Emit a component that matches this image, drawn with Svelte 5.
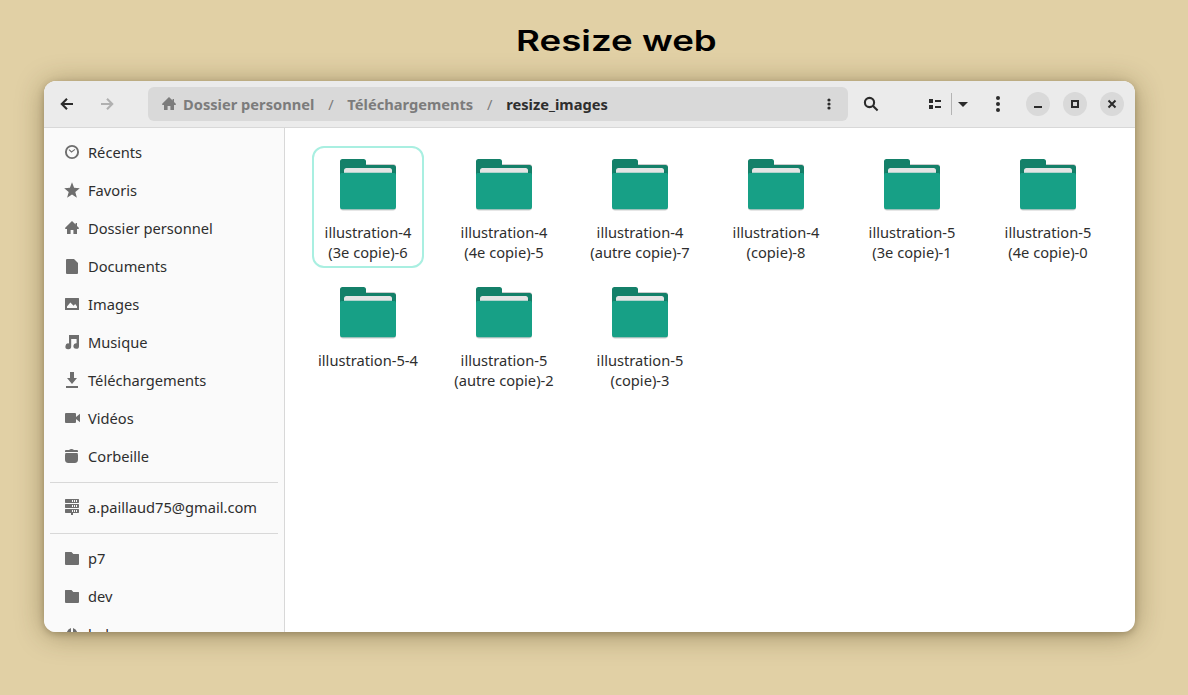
<script>
  const places = [
    { icon: 'clock', label: 'Récents' },
    { icon: 'star', label: 'Favoris' },
    { icon: 'home', label: 'Dossier personnel' },
    { icon: 'doc', label: 'Documents' },
    { icon: 'image', label: 'Images' },
    { icon: 'music', label: 'Musique' },
    { icon: 'download', label: 'Téléchargements' },
    { icon: 'video', label: 'Vidéos' },
    { icon: 'trash', label: 'Corbeille' }
  ];
  const accounts = [{ icon: 'server', label: 'a.paillaud75@gmail.com' }];
  const bookmarks = [
    { icon: 'folder', label: 'p7' },
    { icon: 'folder', label: 'dev' },
    { icon: 'dots', label: 'bak' }
  ];
  const groups = [places, accounts, bookmarks];
  const folders = [
    ['illustration-4', '(3e copie)-6'],
    ['illustration-4', '(4e copie)-5'],
    ['illustration-4', '(autre copie)-7'],
    ['illustration-4', '(copie)-8'],
    ['illustration-5', '(3e copie)-1'],
    ['illustration-5', '(4e copie)-0'],
    ['illustration-5-4'],
    ['illustration-5', '(autre copie)-2'],
    ['illustration-5', '(copie)-3']
  ];
  let selected = $state(0);
</script>

{#snippet glyph(name)}
  <svg class="glyph" width="16" height="16" viewBox="0 0 16 16" fill="currentColor">
    {#if name === 'clock'}
      <circle cx="8" cy="8" r="6.1" fill="none" stroke="currentColor" stroke-width="1.9" />
      <path d="M5 5.600 7.500 8 11 5.400" fill="none" stroke="currentColor" stroke-width="1.100" />
    {:else if name === 'star'}
      <path d="M8 .3 10.100 5.700 15.800 6.200 11.300 9.900 12.900 15.700 8 12.500 3.100 15.700 4.700 9.900 .2 6.200 5.900 5.700Z" />
    {:else if name === 'home'}
      <path d="M8 1 1.200 7.700V9H3v5h3.600V10h2.800v4H13V9h1.800V7.700L13 6V3h-1.400v1.500Z" />
    {:else if name === 'doc'}
      <path d="M3 1H10L14 5V15a1 1 0 0 1-1 1H3a1 1 0 0 1-1-1V2a1 1 0 0 1 1-1Z" />
    {:else if name === 'image'}
      <path fill-rule="evenodd" d="M1.500 2h13a.5.5 0 0 1 .5.5v11a.5.5 0 0 1-.5.5h-13A.5.5 0 0 1 1 13.500V2.500a.5.5 0 0 1 .5-.5ZM3 12h10V10.500L11.200 8 9.600 9.800 6.400 6.400 3 10.500Z" />
    {:else if name === 'music'}
      <path d="M5 1H15V11.900A2.800 2.800 0 1 1 12.600 9.300V5H7.200V12.200A2.900 2.900 0 1 1 5 9.500Z" />
    {:else if name === 'download'}
      <path d="M6 0h4v6h3L8 12 3 6h3ZM2 14h12v2H2Z" />
    {:else if name === 'video'}
      <path d="M2 3h9a1 1 0 0 1 1 1v3l4-3.300v8.600L12 9V12a1 1 0 0 1-1 1H2a1 1 0 0 1-1-1V4a1 1 0 0 1 1-1Z" />
    {:else if name === 'trash'}
      <path d="M5 2Q7.500 0 10 2h3a1 1 0 0 1 1 1v1H1V3a1 1 0 0 1 1-1ZM1.500 5h12l.5 2v4.500a3.500 3.500 0 0 1-3.300 3.500H4.300A3.500 3.500 0 0 1 1 11.500V7Z" />
    {:else if name === 'server'}
      <path fill-rule="evenodd" d="M1.500 0H14.500l.5.500V3.500l-.5.500H1.500L1 3.500V.5ZM8 1V3H9V1ZM10 1V3H11V1ZM12 1V3H13V1ZM1.500 5H14.500l.5.500V8.500l-.5.500H1.500L1 8.500V5.500ZM8 6V8H9V6ZM10 6V8H11V6ZM12 6V8H13V6ZM1.500 10H14.500l.5.500V13.500l-.5.500H1.500L1 13.500V10.500ZM8 11V13H9V11ZM10 11V13H11V11ZM12 11V13H13V11Z" />
      <path d="M7 14h2v2H7Z" />
    {:else if name === 'folder'}
      <path d="M1.500 2H7.500L9.300 4H14.500a.5.5 0 0 1 .5.5V14a1 1 0 0 1-1 1H2a1 1 0 0 1-1-1V2.500A.5.5 0 0 1 1.500 2Z" />
    {:else if name === 'dots'}
      <path d="M7 2V7.500H2.500A7 7 0 0 1 7 2ZM9 2A7 7 0 0 1 13.500 7.500H9Z" />
    {/if}
  </svg>
{/snippet}

<main>
  <h1><span>Resize web</span></h1>

  <section class="window">
    <header>
      <nav class="history">
        <svg width="16" height="16" viewBox="0 0 16 16"><path d="M14 8H3M8 2.800 2.800 8 8 13.200" /></svg>
        <svg class="off" width="16" height="16" viewBox="0 0 16 16"><path d="M2 8H13M8 2.800 13.200 8 8 13.200" /></svg>
      </nav>
      <div class="path">
        {@render glyph('home')}
        <span class="crumb first">Dossier personnel</span>
        <i>/</i>
        <span class="crumb">Téléchargements</span>
        <i>/</i>
        <span class="crumb current">resize_images</span>
        <svg class="more" width="4" height="12" viewBox="0 0 4 12"><circle cx="2" cy="2" r="1.600" /><circle cx="2" cy="6" r="1.600" /><circle cx="2" cy="10" r="1.600" /></svg>
      </div>
      <svg class="search" width="16" height="16" viewBox="0 0 16 16"><circle cx="6.500" cy="6.500" r="4.600" /><path d="M9.800 9.800 14.600 14.500" /></svg>
      <div class="view">
        <svg width="12" height="10" viewBox="0 0 12 10"><path d="M0 0h4v4H0ZM0 6h4v4H0ZM6 1h6v2H6ZM6 7h6v2H6Z" /></svg>
        <span class="rule"></span>
        <svg width="10" height="5" viewBox="0 0 10 5"><path d="M0 0H10L5 5Z" /></svg>
      </div>
      <svg class="menu" width="4" height="16" viewBox="0 0 4 16"><circle cx="2" cy="2" r="2" /><circle cx="2" cy="8" r="2" /><circle cx="2" cy="14" r="2" /></svg>
      <div class="controls">
        <button aria-label="Réduire"><svg width="16" height="16" viewBox="0 0 16 16"><path d="M4 11h8" /></svg></button>
        <button aria-label="Agrandir"><svg width="16" height="16" viewBox="0 0 16 16"><path d="M5 5h6v6H5Z" /></svg></button>
        <button aria-label="Fermer"><svg width="16" height="16" viewBox="0 0 16 16"><path d="M4.500 4.500 11.500 11.500M11.500 4.500 4.500 11.500" /></svg></button>
      </div>
    </header>

    <div class="body">
      <aside>
        {#each groups as group}
          <ul>
            {#each group as item}
              <li>{@render glyph(item.icon)}<span>{item.label}</span></li>
            {/each}
          </ul>
        {/each}
      </aside>
      <div class="files">
        {#each folders as lines, n}
          <button class="tile" class:selected={n === selected} onclick={() => (selected = n)}>
            <svg class="folder" width="64" height="56" viewBox="0 0 64 56">
              <rect class="shade" x="4" y="8" width="56" height="46.500" rx="3" />
              <path fill="#148069" d="M6.500 3H27.500a2.500 2.500 0 0 1 2.500 2.500V9H57.500a2.500 2.500 0 0 1 2.500 2.500V30H4V5.500A2.500 2.500 0 0 1 6.500 3Z" />
              <path fill="#106653" d="M4 18 8 15.500V18H56V15.500L60 18V22H4Z" />
              <path fill="#e4e4e4" d="M10.500 12H53.500a2.500 2.500 0 0 1 2.500 2.500V22H8V14.500A2.500 2.500 0 0 1 10.500 12Z" />
              <path fill="#17a086" d="M6 16.800H58a2 2 0 0 1 2 2V50.700a2.500 2.500 0 0 1-2.500 2.500H6.500A2.500 2.500 0 0 1 4 50.700V18.800a2 2 0 0 1 2-2Z" />
            </svg>
            <span class="name">{#each lines as line}<span>{line}</span>{/each}</span>
          </button>
        {/each}
      </div>
    </div>
  </section>
</main>

<style>
  :global(body) { background: #e1d0a5; }
  main {
    box-sizing: border-box;
    height: 695px;
    padding: 0 53px 0 44px;
    overflow: hidden;
    font: 14.667px "Noto Sans", sans-serif;
    color: #2e2e2e;
  }
  h1 {
    height: 81px;
    margin: 0;
    padding-left: 471.500px;
    box-sizing: border-box;
    font: 600 28px/83px Inter, sans-serif;
    color: #000;
    white-space: nowrap;
  }
  h1 span { display: inline-block; transform: scaleX(1.31); transform-origin: left; }
  .window {
    height: 551px;
    display: flex;
    flex-direction: column;
    overflow: hidden;
    border-radius: 12px;
    background: #fff;
    box-shadow: 0 2px 6px rgba(60, 45, 10, .25), 0 3px 28px rgba(60, 45, 10, .4);
  }
  header {
    flex: none;
    box-sizing: border-box;
    height: 47px;
    display: flex;
    align-items: center;
    padding: 0 11px 0 15px;
    border-bottom: 1px solid #d8d8d8;
    background: #ebebeb;
  }
  header svg { flex: none; fill: #2b2b2b; }
  .history { display: flex; gap: 24px; width: 89px; }
  .history svg { fill: none; stroke: #2b2b2b; stroke-width: 2.1; }
  .history .off { stroke: #b0b0b0; }
  .path {
    box-sizing: border-box;
    width: 700px;
    height: 34px;
    display: flex;
    align-items: center;
    padding: 0 17px 0 13px;
    border-radius: 6px;
    background: #d9d9d9;
    font-weight: 700;
    color: #7c7c7c;
  }
  .path .glyph { fill: #7c7c7c; }
  .crumb.first { margin-left: 6px; }
  .crumb.current { color: #2e2e2e; }
  .path i { width: 33px; text-align: center; font-style: normal; font-weight: 400; }
  .more { margin-left: auto; }
  .search { margin-left: 15px; }
  header .search { fill: none; stroke: #2b2b2b; stroke-width: 2.1; }
  .view { display: flex; align-items: center; margin-left: 50px; }
  .rule { width: 1px; height: 22px; margin: 0 6px 0 10px; background: #b4b4b4; }
  .menu { margin-left: 28px; }
  .controls { display: flex; gap: 13px; margin-left: auto; }
  .controls button {
    width: 24px;
    height: 24px;
    padding: 4px;
    border: 0;
    border-radius: 50%;
    background: #d9d9d9;
  }
  .controls svg { display: block; fill: none; stroke: #2b2b2b; stroke-width: 2; }
  .body { flex: 1; min-height: 0; display: flex; }
  aside {
    flex: none;
    box-sizing: border-box;
    width: 241px;
    overflow: hidden;
    padding: 0 6px;
    border-right: 1px solid #d8d8d8;
    background: #fafafa;
  }
  ul { margin: 0; padding: 5px 0 7px; list-style: none; }
  ul + ul { border-top: 1px solid #d8d8d8; }
  li { height: 38px; display: flex; align-items: center; gap: 8px; padding-left: 14px; }
  li .glyph { color: #6e6e6e; }
  .files {
    display: grid;
    grid-template-columns: repeat(6, 112px);
    grid-auto-rows: 122px;
    gap: 6px 24px;
    align-content: start;
    padding: 18px 0 0 27px;
  }
  .tile {
    box-sizing: border-box;
    display: flex;
    flex-direction: column;
    align-items: center;
    padding: 8px 0 0;
    border: 2px solid transparent;
    border-radius: 12px;
    background: none;
    font: inherit;
    line-height: 20px;
    color: #2e2e2e;
  }
  .tile.selected { border-color: #a9efe1; }
  .folder { flex: none; }
  .shade { fill: rgba(0, 0, 0, .2); }
  .name { display: flex; flex-direction: column; margin-top: 10px; white-space: nowrap; }
</style>
